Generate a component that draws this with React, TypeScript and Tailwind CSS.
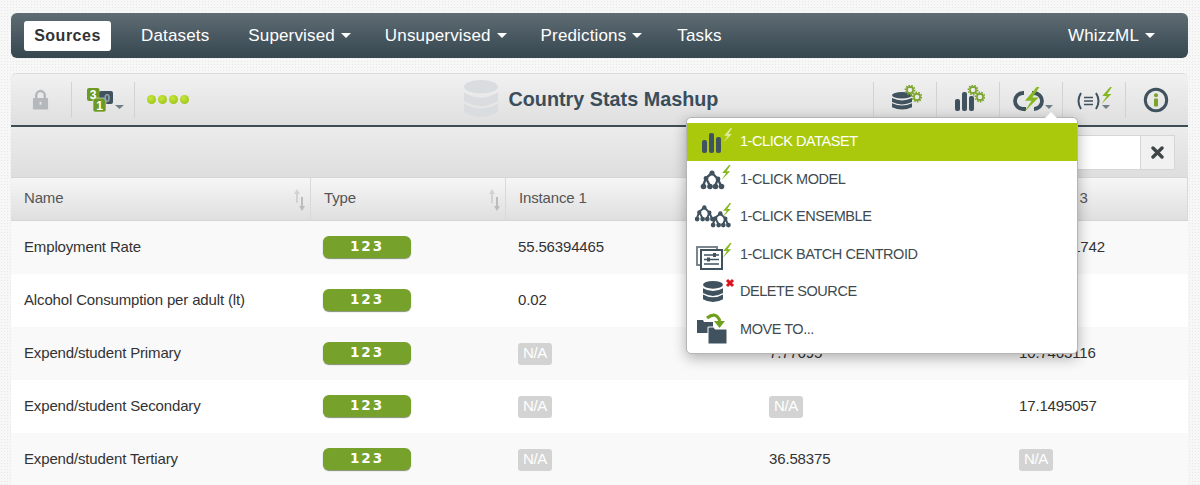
import type { ReactNode } from "react";

const DARK = "#3f525e";
const GREEN = "#7aa329";
const BOLT = "#85b71e";

const rows = [
  { name: "Employment Rate", i1: "55.56394465", i2: "", i3: "64.21371742" },
  { name: "Alcohol Consumption per adult (lt)", i1: "0.02", i2: "", i3: "" },
  { name: "Expend/student Primary", i1: "N/A", i2: "7.77695", i3: "10.7463116" },
  { name: "Expend/student Secondary", i1: "N/A", i2: "N/A", i3: "17.1495057" },
  { name: "Expend/student Tertiary", i1: "N/A", i2: "36.58375", i3: "N/A" },
];

function Caret() {
  return <span className="ml-[6px] inline-block h-0 w-0 border-x-[5px] border-t-[5px] border-x-transparent border-t-white" />;
}

function Db({ x = 0, y = 0, w = 20, h = 20, color = DARK }: { x?: number; y?: number; w?: number; h?: number; color?: string }) {
  const rx = w / 2;
  const ry = h * 0.16;
  const band = h * 0.2;
  const gap = h * 0.06;
  const first = y + ry * 2 + gap;
  return (
    <g fill={color}>
      <ellipse cx={x + rx} cy={y + ry} rx={rx} ry={ry} />
      {[0, 1].map((i) => {
        const top = first + i * (band + gap);
        return (
          <path
            key={i}
            d={`M${x} ${top - ry * 0.5} q${rx} ${ry * 1.5} ${w} 0 v${band} q${-rx} ${ry * 1.5} ${-w} 0 z`}
          />
        );
      })}
    </g>
  );
}

function Gear({ cx, cy, r = 4.5, color = GREEN }: { cx: number; cy: number; r?: number; color?: string }) {
  return (
    <g fill="none" stroke={color}>
      <circle cx={cx} cy={cy} r={r} strokeWidth={1.6} strokeDasharray="1.6 1.2" />
      <circle cx={cx} cy={cy} r={r - 1.5} strokeWidth={1.6} />
    </g>
  );
}

function Bolt({ x, y, s = 1, color = BOLT }: { x: number; y: number; s?: number; color?: string }) {
  return (
    <path
      transform={`translate(${x} ${y}) scale(${s})`}
      fill={color}
      d="M7 0 L1 7 L4.4 7 L0.5 13 L8 5.4 L4.8 5.4 L8.4 0 Z"
    />
  );
}

function Tree({ dx = 0, dy = 0, scale = 1 }: { dx?: number; dy?: number; scale?: number }) {
  return (
    <g transform={`translate(${dx} ${dy}) scale(${scale})`} stroke={DARK} fill={DARK}>
      <path d="M11 3 L5 8 L2 16 M5 8 L9 16 M11 3 L17 9 L14 16 M17 9 L20 16" fill="none" strokeWidth="2.3" />
      <circle cx="11" cy="3" r="2.6" stroke="none" />
      <circle cx="5" cy="8.5" r="2.4" stroke="none" />
      <circle cx="17" cy="9" r="2.4" stroke="none" />
      <circle cx="2.5" cy="16.5" r="2.8" stroke="none" />
      <circle cx="9" cy="16.5" r="2.8" stroke="none" />
      <circle cx="14.5" cy="16.5" r="2.8" stroke="none" />
      <circle cx="20.5" cy="16.5" r="2.8" stroke="none" />
    </g>
  );
}

function MenuIcon({ children }: { children: ReactNode }) {
  return (
    <svg width="36" height="30" viewBox="0 0 36 30" className="shrink-0 overflow-visible">
      {children}
    </svg>
  );
}

function NumbersIcon() {
  return (
    <svg width="38" height="26" viewBox="0 0 38 26">
      <rect x="12" y="4" width="14" height="13" rx="2" fill={DARK} />
      <rect x="0" y="1" width="12.5" height="13" rx="2" fill="#6d9a22" />
      <rect x="6" y="11" width="13" height="14" rx="2" fill="#6d9a22" stroke="#ececec" strokeWidth="0.6" />
      <text x="6" y="11.5" fontSize="12" fontWeight="700" fill="#fff" textAnchor="middle" fontFamily="'Liberation Sans', sans-serif">3</text>
      <text x="20" y="14.5" fontSize="11" fontWeight="700" fill="#9aa7ae" textAnchor="middle" fontFamily="'Liberation Sans', sans-serif">0</text>
      <text x="12.5" y="23" fontSize="12" fontWeight="700" fill="#fff" textAnchor="middle" fontFamily="'Liberation Sans', sans-serif">1</text>
      <path d="M28 18 h9 l-4.5 4 z" fill="#6f7f88" />
    </svg>
  );
}

function SortArrows() {
  return (
    <svg width="11" height="24" viewBox="0 0 11 24" className="absolute right-[5px] top-[10px]">
      <path d="M3 1 L6 6 H4 V15 H2 V6 H0 Z" fill="#d2d2d2" />
      <path d="M8 23 L5 18 H7 V9 H9 V18 H11 Z" fill="#bcbcbc" />
    </svg>
  );
}

function TypeBadge() {
  return (
    <span className="inline-flex h-[22px] w-[88px] items-center justify-center rounded-[6px] bg-[#76a12a] pb-[2px] text-[13.5px] font-bold tracking-[2px] text-white shadow-[0_1px_1px_rgba(50,70,20,0.6)] font-['DejaVu_Sans',sans-serif]">
      123
    </span>
  );
}

function Value({ value }: { value: string }) {
  if (value === "N/A") {
    return <span className="inline-flex h-[22px] w-[34px] items-center justify-center rounded-[3px] bg-[#d3d3d3] tracking-[-0.4px] text-white">N/A</span>;
  }
  return <span>{value}</span>;
}

function ToolButton({ children }: { children: ReactNode }) {
  return (
    <div className="relative flex h-[36px] w-[63px] items-center justify-center border-l border-[#d2d2d2]">
      {children}
    </div>
  );
}

function MenuItem({ icon, label, active = false }: { icon: ReactNode; label: string; active?: boolean }) {
  return (
    <div className={`flex h-[37.6px] items-center pl-[8px] text-[14.5px] tracking-[-0.45px] ${active ? "bg-[#aac90d] text-white" : "text-[#3f4a50]"}`}>
      <div className="mr-[9px] flex w-[36px] justify-center">{icon}</div>
      <span>{label}</span>
    </div>
  );
}

export default function App() {
  return (
    <div className="relative h-[485px] w-[1200px] overflow-hidden bg-[#f7f7f7] bg-[radial-gradient(#e6e6e6_1px,transparent_1px)] bg-[length:3px_3px] pl-[11px] pr-[12px] pt-[13px] font-['Liberation_Sans',sans-serif]">
      {/* Nav */}
      <nav className="flex h-[45px] items-center rounded-[6px] bg-gradient-to-b from-[#5f6c74] to-[#36474f] pl-[13px] pr-[33px] text-[17px] tracking-[0.15px] text-white">
        <span className="mr-[30px] flex h-[30px] w-[87px] items-center justify-center rounded-[3px] bg-white text-[16px] font-bold tracking-[0.5px] text-[#333]">Sources</span>
        <span className="mr-[39px]">Datasets</span>
        <span className="mr-[34px] flex items-center">Supervised<Caret /></span>
        <span className="mr-[34px] flex items-center">Unsupervised<Caret /></span>
        <span className="mr-[35px] flex items-center">Predictions<Caret /></span>
        <span>Tasks</span>
        <span className="ml-auto flex items-center">WhizzML<Caret /></span>
      </nav>

      {/* Toolbar */}
      <div className="mt-[15px] flex h-[54px] items-center rounded-t-[6px] border-t border-[#dcdcdc] border-b-[2px] border-b-[#3f4d55] bg-gradient-to-b from-[#f1f1f1] to-[#dfdfdf]">
        <div className="flex h-[36px] w-[61px] items-center justify-center border-r border-[#d2d2d2] pr-[2px]">
          <svg width="17" height="21" viewBox="0 0 18 22">
            <path d="M4.5 10 V6.5 a4.5 4.5 0 0 1 9 0 V10" fill="none" stroke="#b4b8ba" strokeWidth="2.6" />
            <rect x="1" y="9.5" width="16" height="12" rx="1" fill="#b4b8ba" />
            <rect x="8" y="13.5" width="2" height="3" fill="#e6e6e6" />
          </svg>
        </div>
        <div className="flex h-[36px] w-[63px] items-center justify-center border-r border-[#d2d2d2] pl-[5px]">
          <NumbersIcon />
        </div>
        <div className="ml-[12px] flex gap-[2.5px]">
          {[0, 1, 2, 3].map((i) => (
            <span key={i} className="h-[8.5px] w-[8.5px] rounded-full bg-[radial-gradient(circle_at_40%_35%,#c6e63c,#93bd10)]" />
          ))}
        </div>
        <div className="ml-[274px] flex items-center">
          <svg width="36" height="40" viewBox="0 0 36 40">
            <Db x={1} y={0} w={34} h={42} color="#d9dddf" />
          </svg>
          <span className="ml-[10px] text-[19.8px] font-bold text-[#3a4d5a]">Country Stats Mashup</span>
        </div>
        <div className="ml-auto flex items-center">
          <ToolButton>
            <svg width="34" height="30" viewBox="0 0 34 30">
              <Db x={4} y={7} w={20} h={20} />
              <Gear cx={22} cy={5} r={4.6} />
              <Gear cx={29} cy={12} r={4.6} />
            </svg>
          </ToolButton>
          <ToolButton>
            <svg width="34" height="30" viewBox="0 0 34 30">
              <g fill={DARK}>
                <rect x="4" y="14" width="5" height="12" rx="2" />
                <rect x="11" y="7" width="5" height="19" rx="2" />
                <rect x="18" y="11" width="5" height="15" rx="2" />
              </g>
              <Gear cx={22} cy={5} r={4.6} />
              <Gear cx={29} cy={12} r={4.6} />
            </svg>
          </ToolButton>
          <ToolButton>
            <svg width="44" height="30" viewBox="0 0 44 30">
              <path d="M15 8 H14 a8 8 0 0 0 0 16 H17 M25 24 a8 8 0 0 0 0 -16 H23" fill="none" stroke={DARK} strokeWidth="3.8" />
              <Bolt x={14} y={2} s={1.95} />
              <path d="M36 20 h8 l-4 4 z" fill="#6f7f88" />
            </svg>
          </ToolButton>
          <ToolButton>
            <svg width="42" height="30" viewBox="0 0 42 30">
              <g fill="none" stroke={DARK} strokeWidth="2">
                <path d="M8 8 q-5 8 0 16 M23 8 q5 8 0 16" />
                <path d="M11 12.5 h9 M11 16 h9 M11 19.5 h9" strokeWidth="1.6" />
              </g>
              <Bolt x={28} y={2} s={1.3} />
              <path d="M29 20 h8 l-4 4 z" fill="#6f7f88" />
            </svg>
          </ToolButton>
          <ToolButton>
            <svg width="26" height="26" viewBox="0 0 26 26" className="-ml-[2px]">
              <circle cx="13" cy="13" r="10.7" fill="none" stroke={DARK} strokeWidth="3" />
              <circle cx="13" cy="8.3" r="2" fill={GREEN} />
              <rect x="11" y="11.6" width="4" height="8" rx="1" fill={GREEN} />
            </svg>
          </ToolButton>
        </div>
      </div>

      {/* Filter bar */}
      <div className="flex h-[50px] items-center justify-end bg-gradient-to-b from-[#ececec] to-[#dedede] pr-[13px]">
        <div className="h-[35px] w-[120px] border border-[#d6d6d6] bg-white" />
        <button className="flex h-[35px] w-[34px] items-center justify-center border border-l-0 border-[#d6d6d6] bg-[#f1f1f1]">
          <svg width="13" height="13" viewBox="0 0 13 13">
            <path d="M2 2 L11 11 M11 2 L2 11" stroke="#3f4648" strokeWidth="3.4" strokeLinecap="round" />
          </svg>
        </button>
      </div>

      {/* Table */}
      <div className="text-[15px] tracking-[-0.15px] text-[#333]">
        <div className="grid h-[44px] grid-cols-[300px_195px_251px_250px_1fr] items-stretch border-y border-[#d6d6d6] bg-gradient-to-b from-[#f6f6f6] to-[#dfdfdf] text-[#555]">
          {["Name", "Type", "Instance 1", "Instance 2", "Instance 3"].map((h, i) => (
            <div key={h} className="relative flex items-center border-r border-[#d9d9d9] pb-[2px] pl-[13px]">
              {h}
              {i < 2 && <SortArrows />}
            </div>
          ))}
        </div>
        {rows.map((r, i) => (
          <div
            key={r.name}
            className={`grid h-[53px] grid-cols-[300px_195px_251px_250px_1fr] items-center ${i % 2 === 0 ? "bg-[#f9f9f9]" : "bg-white"}`}
          >
            <div className="pl-[13px]">{r.name}</div>
            <div className="pb-[2px] pl-[12px]"><TypeBadge /></div>
            <div className="pl-[12px]"><Value value={r.i1} /></div>
            <div className="pl-[12px]"><Value value={r.i2} /></div>
            <div className="pl-[12px]"><Value value={r.i3} /></div>
          </div>
        ))}
      </div>

      {/* 1-click menu */}
      <div className="absolute left-[686px] top-[117px] z-10 h-[237px] w-[392px] rounded-[5px] border border-[#b5b5b5] bg-white pt-[5px] shadow-[0_4px_14px_rgba(0,0,0,0.3)]">
        <span className="absolute -top-[6px] left-[358px] h-0 w-0 border-x-[6px] border-b-[6px] border-x-transparent border-b-white" />
        <MenuItem
          active
          label="1-CLICK DATASET"
          icon={
            <MenuIcon>
              <g fill={DARK}>
                <rect x="7" y="13" width="5" height="13" rx="2" />
                <rect x="14" y="6" width="5" height="20" rx="2" />
                <rect x="21" y="10" width="5" height="16" rx="2" />
              </g>
              <Bolt x={28} y={1} s={1.1} color="#dfeb9a" />
            </MenuIcon>
          }
        />
        <MenuItem
          label="1-CLICK MODEL"
          icon={
            <MenuIcon>
              <Tree dx={6} dy={6} />
              <Bolt x={26} y={1} s={1.15} />
            </MenuIcon>
          }
        />
        <MenuItem
          label="1-CLICK ENSEMBLE"
          icon={
            <MenuIcon>
              <Tree dx={0} dy={3} scale={0.85} />
              <Tree dx={16} dy={9} scale={0.85} />
              <Bolt x={27} y={1} s={1.1} />
            </MenuIcon>
          }
        />
        <MenuItem
          label="1-CLICK BATCH CENTROID"
          icon={
            <MenuIcon>
              <rect x="2" y="7" width="20" height="18" fill="none" stroke="#6c7a83" strokeWidth="1.8" />
              <rect x="6" y="10" width="21" height="19" fill="#fff" stroke={DARK} strokeWidth="2" />
              <path d="M9 15 h15 M9 19.5 h15 M9 24 h15" stroke={DARK} strokeWidth="1.5" />
              <rect x="18" y="13" width="3" height="4" fill={DARK} />
              <rect x="12" y="17.5" width="3" height="4" fill={DARK} />
              <Bolt x={27} y={3} s={1.15} />
            </MenuIcon>
          }
        />
        <MenuItem
          label="DELETE SOURCE"
          icon={
            <MenuIcon>
              <Db x={8} y={4} w={20} h={24} />
              <path d="M32 3 L38 9 M38 3 L32 9" stroke="#e0101c" strokeWidth="3" />
            </MenuIcon>
          }
        />
        <MenuItem
          label="MOVE TO..."
          icon={
            <MenuIcon>
              <path d="M2 5 h6 l1 2 h9 v11 H2 z" fill={DARK} />
              <path d="M13 12 h6 l1 2 h12 v15 H13 z" fill={DARK} stroke="#fff" strokeWidth="1" />
              <path d="M12 3 q9 -7 13 3" fill="none" stroke="#71a01f" strokeWidth="3.2" />
              <path d="M19 6 h11 l-5.5 7 z" fill="#71a01f" />
            </MenuIcon>
          }
        />
      </div>
    </div>
  );
}
